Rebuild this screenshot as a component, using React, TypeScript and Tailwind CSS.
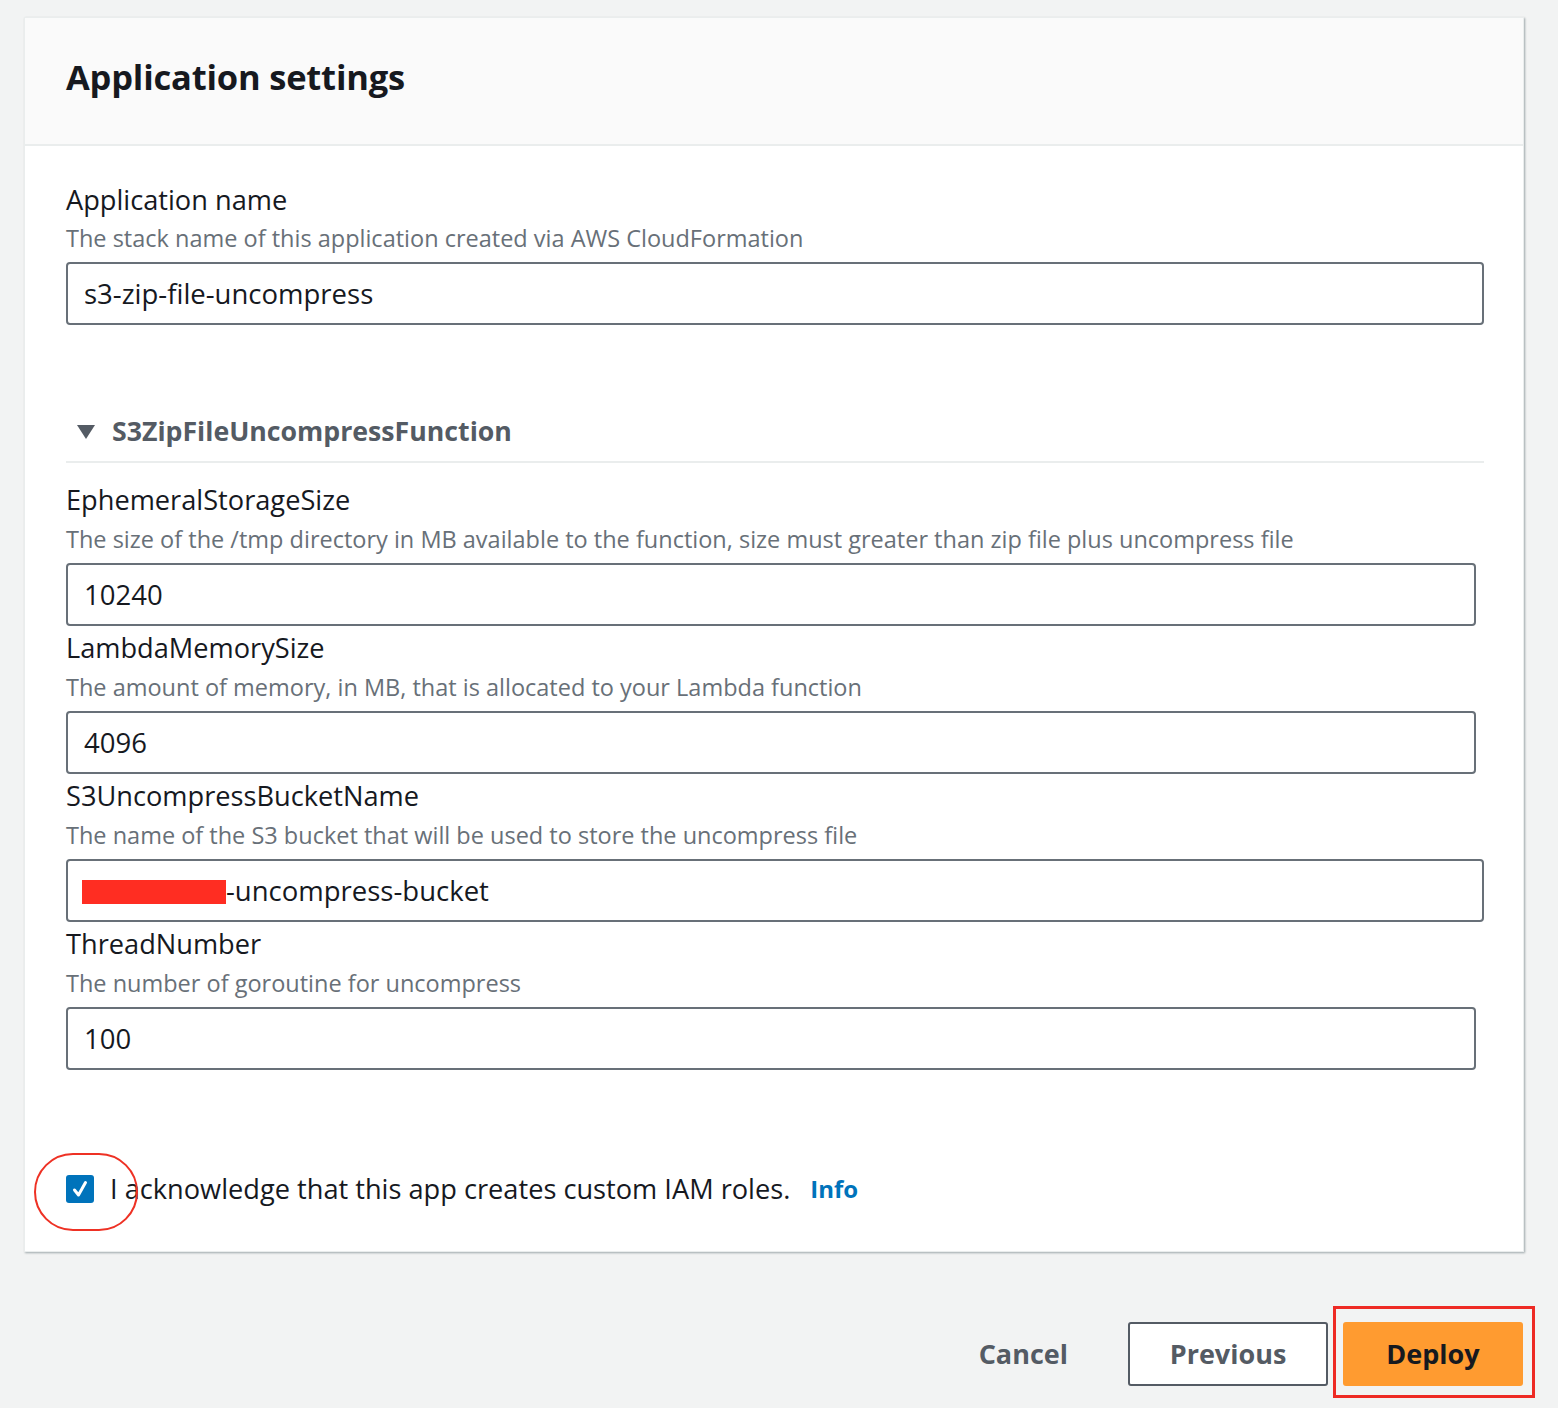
import React from 'react'

interface Field {
  label: string
  description: string
  value: string
  wide?: boolean
  redacted?: boolean
}

const fields: Field[] = [
  {
    label: 'EphemeralStorageSize',
    description:
      'The size of the /tmp directory in MB available to the function, size must greater than zip file plus uncompress file',
    value: '10240',
  },
  {
    label: 'LambdaMemorySize',
    description: 'The amount of memory, in MB, that is allocated to your Lambda function',
    value: '4096',
  },
  {
    label: 'S3UncompressBucketName',
    description: 'The name of the S3 bucket that will be used to store the uncompress file',
    value: '-uncompress-bucket',
    wide: true,
    redacted: true,
  },
  {
    label: 'ThreadNumber',
    description: 'The number of goroutine for uncompress',
    value: '100',
  },
]

const font = { fontFamily: '"Open Sans", "Noto Sans", sans-serif' }

// Text input styled like the console's read-only field
const Input = ({ value, wide, redacted }: { value: string; wide?: boolean; redacted?: boolean }) => (
  <div
    className={`h-[63px] border-2 border-[#687078] rounded-[4px] bg-white flex items-center px-[16px] text-[27.5px] text-[#16191f] ${
      wide ? 'w-[1418px]' : 'w-[1410px]'
    }`}
  >
    {redacted && <span className="inline-block w-[144px] h-[24px] bg-[#ff2d22] ml-[-2px] mt-[3px]" />}
    <span>{value}</span>
  </div>
)

export default function App() {
  return (
    <div className="w-[1558px] h-[1408px] bg-[#f2f3f3] relative overflow-hidden" style={font}>
      <div className="pt-[17px] pl-[24px]">
        {/* Card */}
        <div className="w-[1500px] bg-white border border-[#eaeded] shadow-[1px_1px_2px_rgba(0,28,36,0.35)]">
          <div className="h-[128px] bg-[#fafafa] border-b-2 border-[#eaeded] flex items-center pl-[41px] pb-[8px]">
            <h2 className="text-[34.5px] font-bold text-[#16191f] tracking-[-0.2px]">Application settings</h2>
          </div>

          <div className="pl-[41px] pt-[36px] pb-[41px]">
            <div className="text-[27.2px] text-[#16191f] leading-[36px]">Application name</div>
            <div className="text-[23.5px] text-[#687078] leading-[36px] mt-[2px] mb-[6px]">
              The stack name of this application created via AWS CloudFormation
            </div>
            <Input value="s3-zip-file-uncompress" wide />

            {/* Collapsible section */}
            <div className="mt-[86px] w-[1418px] border-b-2 border-[#eaeded] pb-[10px] flex items-center">
              <svg width="20" height="16" viewBox="0 0 20 16" className="ml-[10px] mr-[16px]">
                <polygon points="1,2 19,2 10,16" fill="#545b64" />
              </svg>
              <span className="text-[26.7px] font-bold text-[#545b64]">S3ZipFileUncompressFunction</span>
            </div>

            <div className="mt-[19px] flex flex-col">
              {fields.map((f) => (
                <div key={f.label} className="mb-[4px]">
                  <div className="text-[27.2px] text-[#16191f] leading-[36px]">{f.label}</div>
                  <div className="text-[23.5px] text-[#687078] leading-[36px] mt-[3px] mb-[6px]">{f.description}</div>
                  <Input value={f.value} wide={f.wide} redacted={f.redacted} />
                </div>
              ))}
            </div>

            {/* Acknowledge */}
            <div className="mt-[95px] flex items-center relative">
              <div className="w-[28px] h-[28px] rounded-[3px] bg-[#0073bb] flex items-center justify-center">
                <svg width="18" height="20" viewBox="0 0 18 20">
                  <path d="M3.5 11 L7.5 16 L14.5 3.5" stroke="white" strokeWidth="3" fill="none" strokeLinecap="round" strokeLinejoin="round" />
                </svg>
              </div>
              <span className="ml-[16px] text-[27.2px] text-[#16191f]">I acknowledge that this app creates custom IAM roles.</span>
              <span className="ml-[20px] text-[24px] font-bold text-[#0073bb]">Info</span>
              <div className="absolute left-[-32px] top-[-16px] w-[104px] h-[78px] rounded-full border-2 border-[#ee3124]" />
            </div>
          </div>
        </div>
      </div>

      {/* Footer actions */}
      <div className="absolute left-0 top-[1306px] w-[1558px] flex items-start justify-end pr-[23px]">
        <div className="mt-[16px] h-[64px] flex items-center mr-[5px]">
          <span className="text-[27px] font-bold text-[#545b64] mr-[60px]">Cancel</span>
          <div className="w-[200px] h-[64px] border-2 border-[#545b64] rounded-[3px] bg-white flex items-center justify-center text-[27px] font-bold text-[#545b64]">
            Previous
          </div>
        </div>
        <div className="w-[202px] h-[92px] border-[3px] border-[#ee2a24] pt-[13px] pl-[7px]">
          <div className="w-[180px] h-[64px] rounded-[3px] bg-[#ff9b30] flex items-center justify-center text-[27px] font-bold text-[#16191f]">
            Deploy
          </div>
        </div>
      </div>
    </div>
  )
}
